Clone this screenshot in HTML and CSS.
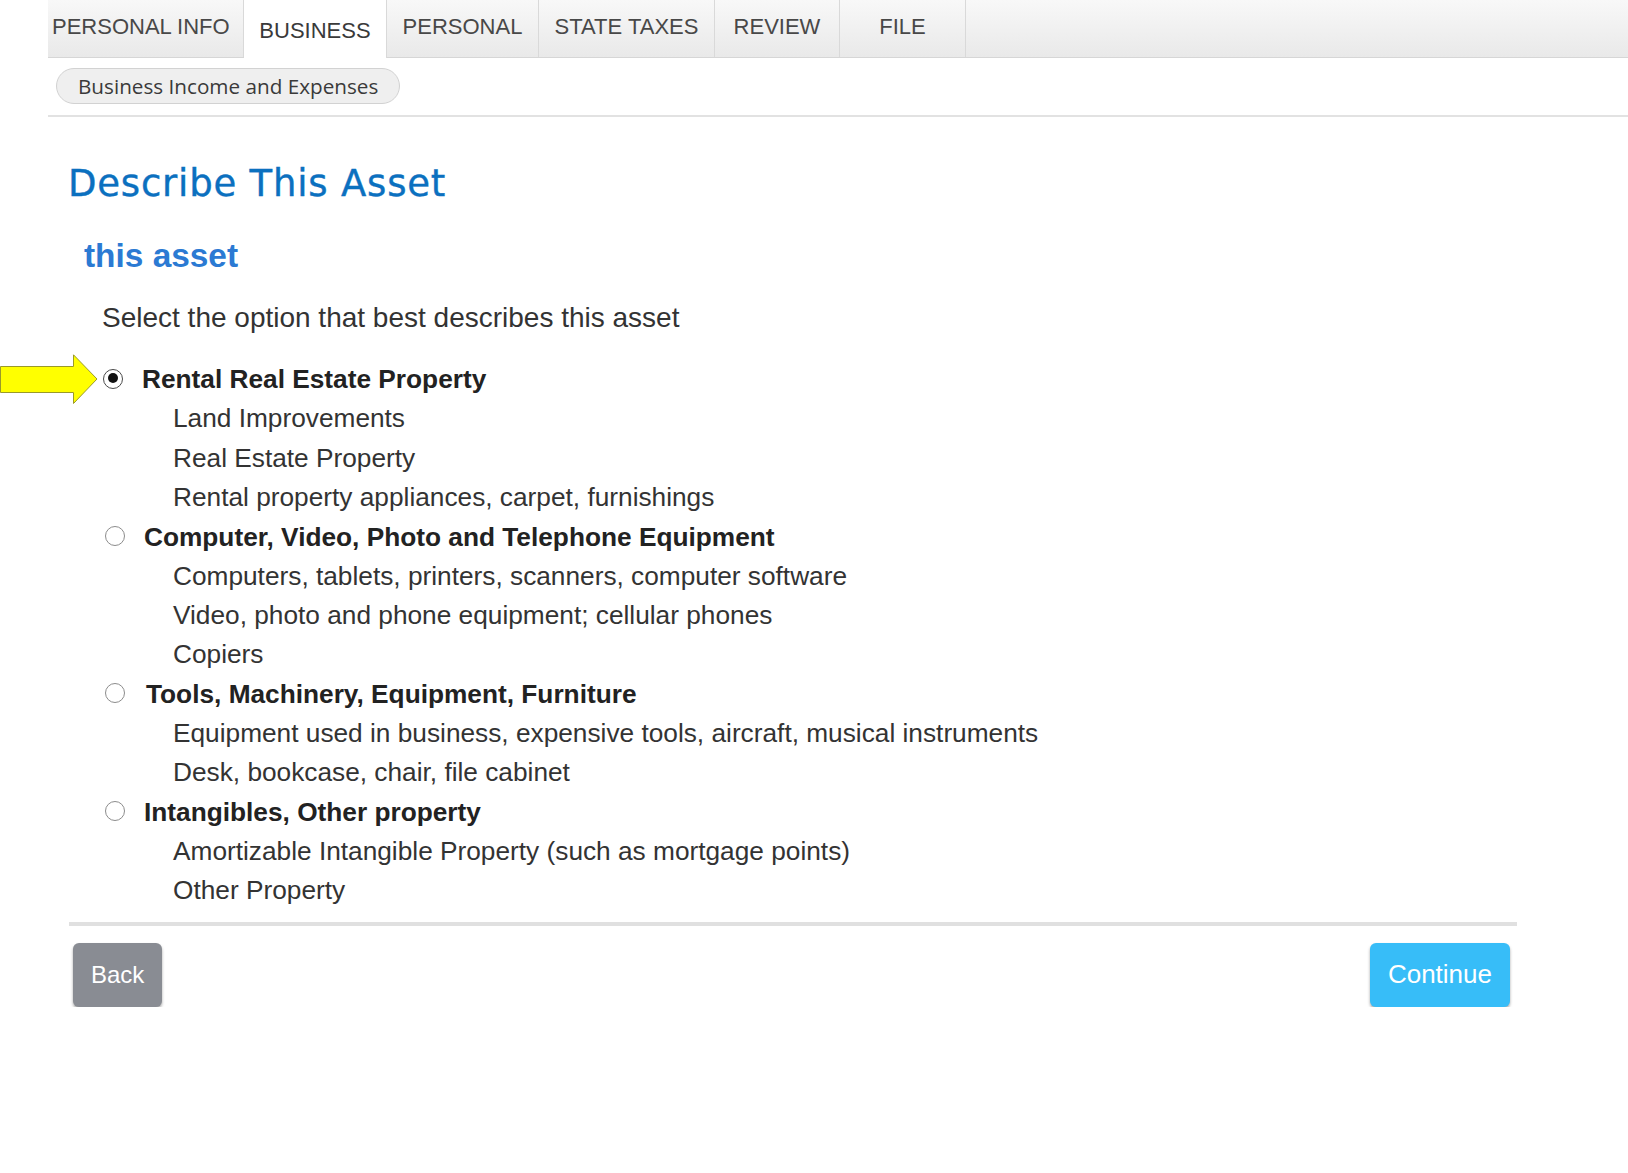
FILE: index.html
```html
<!DOCTYPE html>
<html lang="en">
<head>
<meta charset="utf-8">
<title>Describe This Asset</title>
<link rel="stylesheet" href="styles.css">
</head>
<body>
<nav class="tabs">
  <div class="tab tab-first">PERSONAL INFO</div>
  <div class="tab tab-active tab-business">BUSINESS</div>
  <div class="tab tab-personal">PERSONAL</div>
  <div class="tab tab-state">STATE TAXES</div>
  <div class="tab tab-review">REVIEW</div>
  <div class="tab tab-file">FILE</div>
  <div class="tab-fill"></div>
</nav>
<div class="subnav">
  <span class="pill">Business Income and Expenses</span>
</div>
<main class="content">
  <h1 class="title">Describe This Asset</h1>
  <h2 class="subtitle">this asset</h2>
  <p class="prompt">Select the option that best describes this asset</p>
  <ul class="options">
    <li class="option">
      <div class="opt-label">
        <svg class="arrow" width="98" height="51" viewBox="0 0 98 51"><polygon points="0.5,12.5 73.5,12.5 73.5,0.8 97,25 73.5,49.5 73.5,38.5 0.5,38.5" fill="#ffff00" stroke="#9a9a2a" stroke-width="1"/></svg>
        <span class="radio radio-checked"></span>
        <span class="label-text">Rental Real Estate Property</span>
      </div>
      <div class="sub">Land Improvements</div>
      <div class="sub">Real Estate Property</div>
      <div class="sub">Rental property appliances, carpet, furnishings</div>
    </li>
    <li class="option">
      <div class="opt-label">
        <span class="radio"></span>
        <span class="label-text">Computer, Video, Photo and Telephone Equipment</span>
      </div>
      <div class="sub">Computers, tablets, printers, scanners, computer software</div>
      <div class="sub">Video, photo and phone equipment; cellular phones</div>
      <div class="sub">Copiers</div>
    </li>
    <li class="option">
      <div class="opt-label">
        <span class="radio"></span>
        <span class="label-text label-shift">Tools, Machinery, Equipment, Furniture</span>
      </div>
      <div class="sub">Equipment used in business, expensive tools, aircraft, musical instruments</div>
      <div class="sub">Desk, bookcase, chair, file cabinet</div>
    </li>
    <li class="option">
      <div class="opt-label">
        <span class="radio"></span>
        <span class="label-text">Intangibles, Other property</span>
      </div>
      <div class="sub">Amortizable Intangible Property (such as mortgage points)</div>
      <div class="sub">Other Property</div>
    </li>
  </ul>
  <div class="footer">
    <button class="btn btn-back" type="button">Back</button>
    <button class="btn btn-continue" type="button">Continue</button>
  </div>
</main>
</body>
</html>
```
FILE: styles.css
```css
* { box-sizing: border-box; }

html, body {
  margin: 0;
  padding: 0;
  background: #ffffff;
}

body {
  font-family: "Liberation Sans", Arial, sans-serif;
  color: #333333;
}

/* ---------- top tabs ---------- */
.tabs {
  display: flex;
  margin-left: 48px;
  height: 58px;
  background: linear-gradient(#f8f8f8, #e9e9e9);
  border-bottom: 1px solid #d6d6d6;
}

.tab {
  flex: none;
  padding: 1px 0 0 0;
  text-align: center;
  font-size: 22px;
  line-height: 51px;
  color: #484848;
  border-right: 1px solid #d9d9d9;
  white-space: nowrap;
}

.tab-first {
  width: 196px;
  padding-left: 4px;
  text-align: left;
}

.tab-business { width: 143px; }
.tab-personal { width: 152px; }
.tab-state { width: 176px; }
.tab-review { width: 125px; }
.tab-file { width: 126px; }

.tab-active {
  background: #ffffff;
  padding-top: 5px;
  height: 58px;
  margin-bottom: -1px;
  color: #3a3a3a;
}

.tab-fill {
  flex: 1;
}

/* ---------- sub navigation ---------- */
.subnav {
  margin-left: 48px;
  padding: 10px 0 11px 8px;
  border-bottom: 2px solid #e2e2e2;
}

.pill {
  display: inline-block;
  height: 36px;
  padding: 0 21px;
  border: 1px solid #d2d2d2;
  border-radius: 18px;
  background: #efefef;
  font-family: "Open Sans", Lato, sans-serif;
  font-size: 20.7px;
  line-height: 34px;
  color: #3a3a3a;
}

/* ---------- content ---------- */
.content {
  margin-left: 68px;
  width: 1449px;
}

.title {
  margin: 47px 0 0 0;
  font-family: "DejaVu Sans", "Open Sans", sans-serif;
  font-weight: 400;
  font-size: 37px;
  letter-spacing: 0.8px;
  line-height: 40px;
  color: #0b70bf;
  -webkit-text-stroke: 0.4px #0b70bf;
}

.subtitle {
  margin: 32px 0 0 16px;
  font-weight: 700;
  font-size: 33.4px;
  line-height: 40px;
  color: #2b7ad3;
}

.prompt {
  margin: 22px 0 0 34px;
  font-size: 28px;
  line-height: 40px;
  color: #333333;
}

.options {
  list-style: none;
  margin: 22px 0 0 36px;
  padding: 0;
}

.option {
  margin: 0;
}

.opt-label {
  position: relative;
  display: flex;
  align-items: center;
  gap: 19px;
  height: 39.35px;
  font-weight: 700;
  font-size: 26.25px;
  color: #222222;
}

.label-shift {
  margin-left: 2px;
}

.arrow {
  position: absolute;
  left: -104px;
  top: -6px;
}

.radio {
  flex: none;
  width: 20px;
  height: 20px;
  margin-left: 1px;
  border-radius: 50%;
  border: 1.5px solid #8c8c8c;
  background: #ffffff;
  position: relative;
  top: -1px;
}

.radio-checked {
  margin-left: -1px;
  border: 1.5px solid #4a4a4a;
}

.radio-checked::after {
  content: "";
  position: absolute;
  left: 3.5px;
  top: 3.5px;
  width: 10px;
  height: 10px;
  border-radius: 50%;
  background: #111111;
}

.sub {
  padding-left: 69px;
  font-size: 26.25px;
  line-height: 39.35px;
  color: #333333;
  white-space: nowrap;
}

/* ---------- footer ---------- */
.footer {
  margin-top: 11px;
  margin-left: 1px;
  border-top: 4px solid #e0e0e0;
  padding: 17px 7px 0 4px;
  display: flex;
  justify-content: space-between;
}

.btn {
  height: 64px;
  padding: 0 18px;
  border: none;
  border-radius: 6px;
  color: #ffffff;
  font-family: "Liberation Sans", Arial, sans-serif;
  box-shadow: 0 2px 3px rgba(0, 0, 0, 0.35);
  cursor: pointer;
}

.btn-back {
  background: #898c93;
  font-size: 24px;
}

.btn-continue {
  background: #37bdf8;
  font-size: 26px;
}
```
